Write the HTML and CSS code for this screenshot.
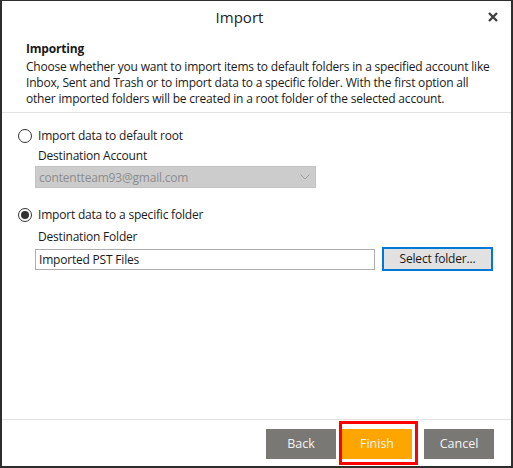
FILE: index.html
```html
<!DOCTYPE html>
<html lang="en">
<head>
<meta charset="utf-8">
<title>Import</title>
<link rel="stylesheet" href="styles.css">
</head>
<body>
<div class="dialog">
  <header class="titlebar">
    <div class="title">Import</div>
    <div class="close" aria-label="Close">
      <svg width="10" height="10" viewBox="0 0 10 10"><path d="M1 1 L9 9 M9 1 L1 9" stroke="#404040" stroke-width="2.4" stroke-linecap="butt" fill="none"/></svg>
    </div>
  </header>
  <section class="intro">
    <h2 class="intro-head">Importing</h2>
    <p class="intro-text">Choose whether you want to import items to default folders in a specified account like<br>Inbox, Sent and Trash or to import data to a specific folder. With the first option all<br>other imported folders will be created in a root folder of the selected account.</p>
  </section>
  <main class="options">
    <div class="radio-row">
      <span class="radio"></span>
      <span class="radio-label">Import data to default root</span>
    </div>
    <div class="field-label">Destination Account</div>
    <div class="select">
      <span class="select-text">contentteam93@gmail.com</span>
      <svg class="chevron" width="10" height="6" viewBox="0 0 10 6"><path d="M0.5 0.5 L5 5 L9.5 0.5" stroke="#a0a0a0" stroke-width="1" fill="none"/></svg>
    </div>
    <div class="radio-row second">
      <span class="radio checked"></span>
      <span class="radio-label">Import data to a specific folder</span>
    </div>
    <div class="field-label folder-label">Destination Folder</div>
    <div class="folder-row">
      <div class="text-input">Imported PST Files</div>
      <div class="btn-select">Select folder...</div>
    </div>
  </main>
  <footer class="actions">
    <div class="btn back">Back</div>
    <div class="finish-wrap">
      <div class="btn finish">Finish</div>
      <span class="highlight"></span>
    </div>
    <div class="btn cancel">Cancel</div>
  </footer>
</div>
</body>
</html>
```
FILE: styles.css
```css
* { box-sizing: border-box; }
html, body { margin: 0; padding: 0; background: #fff; }
body {
  font-family: "Open Sans", "Noto Sans", sans-serif;
  font-size: 12px;
  letter-spacing: -0.2px;
  color: #1a1a1a;
}
.dialog {
  width: 513px;
  height: 468px;
  border-style: solid;
  border-color: #2e2e2e;
  border-width: 1px 2px 2px 2px;
  display: flex;
  flex-direction: column;
  background: #fff;
}
.titlebar {
  height: 32px;
  display: flex;
  align-items: center;
}
.title {
  flex: 1;
  text-align: center;
  font-size: 15px;
  letter-spacing: 0;
  color: #222;
}
.close {
  width: 34px;
  display: flex;
  justify-content: center;
  padding-right: 3px;
}
.intro {
  padding: 8px 0 5px 24px;
  border-bottom: 1px solid #e2e2e2;
}
.intro-head {
  margin: 0;
  font-size: 12px;
  font-weight: 700;
  line-height: 16px;
}
.intro-text {
  margin: 2px 0 0;
  white-space: nowrap;
  line-height: 16px;
}
.options {
  flex: 1;
  padding: 13px 0 0 16px;
}
.radio-row {
  display: flex;
  align-items: center;
  height: 20px;
  gap: 6px;
}
.radio-row.second { margin-top: 17px; }
.radio {
  width: 14px;
  height: 14px;
  border: 1px solid #333;
  border-radius: 50%;
  display: flex;
  align-items: center;
  justify-content: center;
}
.radio.checked::after {
  content: "";
  width: 8px;
  height: 8px;
  border-radius: 50%;
  background: #333;
}
.radio-label { line-height: 20px; }
.field-label {
  margin: 1px 0 0 20px;
  line-height: 18px;
}
.folder-label { margin-top: 3px; }
.select {
  margin: 1px 0 0 17px;
  width: 281px;
  height: 22px;
  background: #cccccc;
  border: 1px solid #c2c2c2;
  display: flex;
  align-items: center;
  justify-content: space-between;
  padding: 0 5px 0 3px;
}
.select-text { color: #8c8c8c; }
.folder-row {
  margin: 1px 0 0 17px;
  display: flex;
  align-items: center;
  gap: 7px;
}
.text-input {
  width: 340px;
  height: 21px;
  border: 1px solid #adadad;
  padding: 0 4px 0 3px;
  line-height: 19px;
}
.btn-select {
  width: 111px;
  height: 24px;
  border: 2px solid #0078d7;
  background: #e1e1e1;
  text-align: center;
  line-height: 20px;
}
.actions {
  border-top: 1px solid #e2e2e2;
  height: 47px;
  display: flex;
  justify-content: flex-end;
  align-items: flex-start;
  padding: 9px 17px 0 0;
}
.btn {
  width: 70px;
  height: 30px;
  line-height: 30px;
  text-align: center;
  color: #f4f4f4;
  font-size: 12.5px;
  letter-spacing: 0;
}
.back { background: #7a7874; }
.cancel { background: #7a7874; margin-left: 12px; }
.finish-wrap { position: relative; margin-left: 6px; }
.finish { background: #ffa500; }
.highlight {
  position: absolute;
  left: -3px;
  right: -6px;
  top: -8px;
  bottom: -6px;
  border: 3px solid #ff0000;
}
```
